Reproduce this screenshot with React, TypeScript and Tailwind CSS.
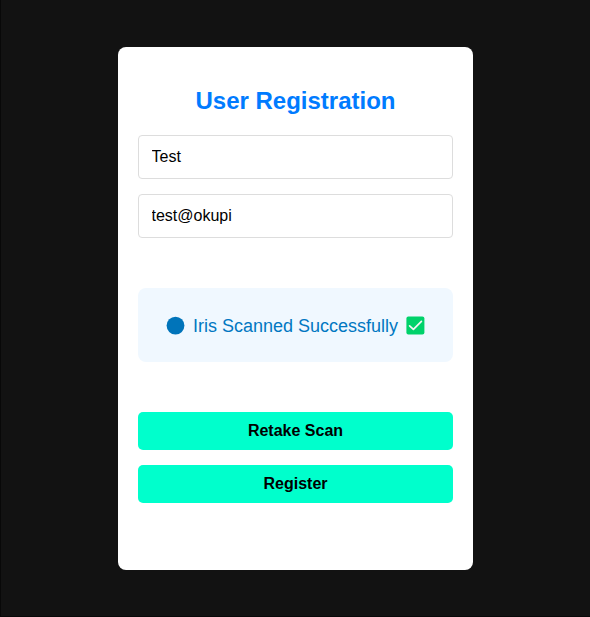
import React from "react";

const inputClass =
  "block h-11 w-full rounded-[4px] border border-[#dddddd] bg-white px-[12.5px] text-[16px] text-black outline-none";
const buttonClass =
  "block h-[38px] w-full rounded-[5px] bg-[#00ffcc] pb-px text-center text-[16px] font-bold text-black";

export default function App() {
  return (
    <div className="flex h-[617px] w-full justify-center border-b border-l border-[#080808] bg-[#121212] pt-[47px] font-['Liberation_Sans',Arial,sans-serif]">
      <main className="h-[523px] w-[355px] rounded-[8px] bg-white px-5 pt-10">
        <h1 className="h-[28px] text-center text-[24px] leading-[28px] font-bold text-[#007bff]">
          User Registration
        </h1>
        <input className={`${inputClass} mt-5`} defaultValue="Test" />
        <input className={`${inputClass} mt-[15px]`} defaultValue="test@okupi" />
        <div className="mt-[50px] flex h-[74px] items-center justify-center rounded-[8px] bg-[#f0f8ff] pt-px text-[18px] text-[#0077c2]">
          <svg className="mr-2 size-[18px] overflow-visible" viewBox="0 0 18 18">
            <circle cx="8.5" cy="8.6" r="8.9" fill="#0074ba" />
          </svg>
          <span className="pt-px">Iris Scanned Successfully</span>
          <svg className="ml-2 h-[19px] w-[18px] overflow-visible" viewBox="0 0 18 19">
            <rect x="0.4" y="0.5" width="18" height="18" rx="2" fill="#00d26a" />
            <path d="M3.6 9.8 7.4 13.4 15.4 5.4" fill="none" stroke="#f4f4f4" strokeWidth="1.7" strokeLinecap="round" strokeLinejoin="round" />
          </svg>
        </div>
        <button className={`${buttonClass} mt-[50px]`}>Retake Scan</button>
        <button className={`${buttonClass} mt-[15px]`}>Register</button>
      </main>
    </div>
  );
}
